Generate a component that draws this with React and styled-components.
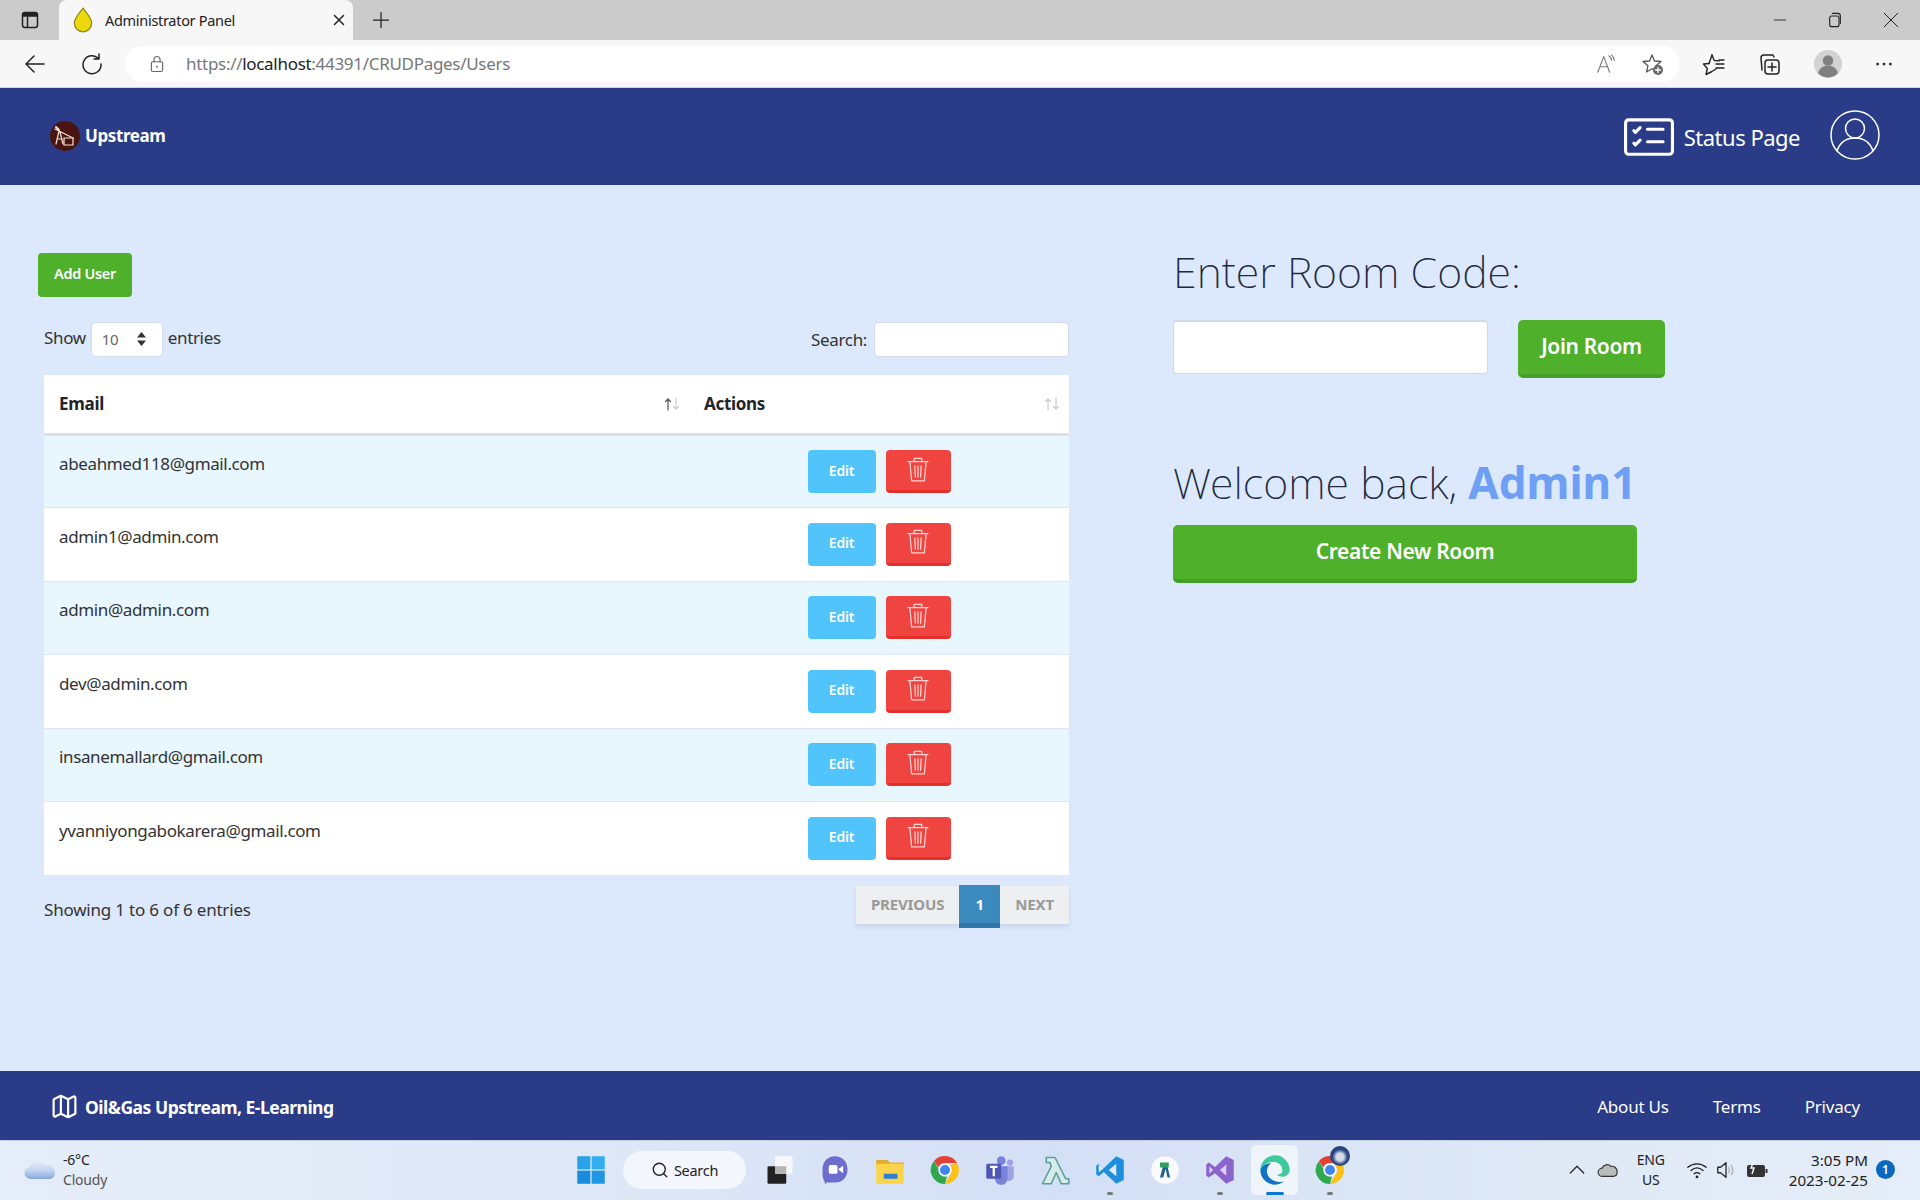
import React from "react";
import styled, { createGlobalStyle } from "styled-components";
import { BsCardChecklist } from "react-icons/bs";
import { Search as SearchGlass, Map as MapIcon } from "lucide-react";

const GlobalStyle = createGlobalStyle`
  html, body {
    margin: 0;
    padding: 0;
    height: 100%;
    overflow: hidden;
  }
  body {
    font-family: "Noto Sans", "Open Sans", sans-serif;
    background: #dce8fb;
  }
  * { box-sizing: border-box; }
`;

const Page = styled.div`
  display: flex;
  flex-direction: column;
  width: 1920px;
  height: 1200px;
`;

/* browser chrome */
const TabStrip = styled.div`
  display: flex;
  align-items: flex-end;
  height: 40px;
  background: #cbcbcb;
  flex: none;
`;
const SideToggle = styled.div`
  width: 59px;
  height: 40px;
  padding-left: 20px;
  display: flex;
  align-items: center;
`;
const Tab = styled.div`
  width: 294px;
  height: 40px;
  display: flex;
  align-items: center;
  padding: 0 5px 0 14px;
  background: #f7f7f7;
  border-radius: 8px 8px 0 0;
`;
const TabTitle = styled.span`
  flex: 1;
  margin-left: 12px;
  font-size: 14.5px;
  letter-spacing: -0.3px;
  color: #222;
`;
const NewTab = styled.div`
  width: 56px;
  padding-left: 18px;
  height: 40px;
  display: flex;
  align-items: center;
`;
const WindowButtons = styled.div`
  margin-left: auto;
  display: flex;
  align-items: center;
  height: 40px;
  padding-right: 21px;
  gap: 40px;
`;
const Toolbar = styled.div`
  display: flex;
  align-items: center;
  flex: none;
  height: 48px;
  background: #f7f7f7;
  border-bottom: 1px solid #c9d6ea;
`;
const ToolSlot = styled.div`
  width: ${(p) => p.$w || 55}px;
  display: flex;
  justify-content: center;
  align-items: center;
`;
const AddressBar = styled.div`
  width: 1555px;
  height: 36px;
  margin-left: 11px;
  border-radius: 18px;
  background: #fff;
  display: flex;
  align-items: center;
  padding-left: 23px;
  flex: none;
`;
const Url = styled.div`
  margin-left: 20px;
  font-size: 17px;
  letter-spacing: -0.3px;
  color: #777;
  & b {
    font-weight: 400;
    color: #222;
  }
`;
const AddressRight = styled.div`
  margin-left: auto;
  display: flex;
  align-items: center;
  gap: 23px;
  padding-right: 16px;
`;

/* site nav */
const NavBar = styled.header`
  flex: none;
  height: 97px;
  background: #2a3b87;
  color: #fff;
  display: flex;
  align-items: center;
  padding: 0 40px 0 50px;
`;
const Brand = styled.div`
  display: flex;
  align-items: center;
  gap: 5px;
  margin-top: -2px;
  font-size: 17px;
  font-weight: 700;
  letter-spacing: -0.4px;
`;
const NavRight = styled.div`
  margin-left: auto;
  display: flex;
  align-items: center;
`;
const StatusLink = styled.div`
  display: flex;
  align-items: center;
  gap: 10px;
  font-size: 22px;
  letter-spacing: -0.5px;
  margin-right: 30px;
`;
const UserWrap = styled.div`
  margin-bottom: 4px;
`;

/* page body */
const Main = styled.main`
  flex: 1;
  display: flex;
  padding: 68px 0 0 38px;
  background: #dce8fb;
`;
const LeftCol = styled.section`
  width: 1031px;
  flex: none;
`;
const RightCol = styled.section`
  margin-left: 104px;
  margin-top: 1px;
  width: 500px;
  flex: none;
`;
const AddButton = styled.button`
  display: block;
  width: 94px;
  height: 44px;
  border: 0;
  border-radius: 4px;
  background: #4fb02c;
  color: #fff;
  font: 600 14.5px "Noto Sans", sans-serif;
  letter-spacing: -0.3px;
  padding: 0 0 4px;
`;
const TableTools = styled.div`
  display: flex;
  align-items: center;
  justify-content: space-between;
  margin: 24px 0 18px 6px;
  font-size: 17px;
  letter-spacing: -0.35px;
  color: #333;
`;
const ShowGroup = styled.label`
  display: flex;
  align-items: center;
  gap: 5px;
  height: 36px;
  & > span { margin-top: -3px; }
`;
const SelectBox = styled.div`
  width: 72px;
  height: 35px;
  background: #fff;
  border: 1px solid #d5dded;
  border-radius: 5px;
  display: flex;
  align-items: center;
  justify-content: space-between;
  padding: 0 15px 0 10px;
  font-size: 15px;
  color: #666;
`;
const SearchGroup = styled.label`
  display: flex;
  align-items: center;
  gap: 7px;
`;
const SearchInput = styled.input`
  width: 195px;
  height: 35px;
  background: #fff;
  border: 1px solid #d5dbe8;
  border-radius: 4px;
  outline: none;
`;
const Table = styled.table`
  width: 1025px;
  margin-left: 6px;
  border-collapse: collapse;
  table-layout: fixed;
  background: #fff;
  color: #333;
`;
const Th = styled.th`
  height: 59px;
  width: ${(p) => p.$w}px;
  padding: 0 9px 0 15px;
  border-bottom: 3px solid #dde1e6;
  text-align: left;
  font-size: 17px;
  font-weight: 700;
  letter-spacing: -0.3px;
  color: #212529;
`;
const ThInner = styled.div`
  display: flex;
  align-items: center;
  justify-content: space-between;
`;
const Tr = styled.tr`
  height: 73.5px;
  background: ${(p) => (p.$odd ? "#e8f6fe" : "#fff")};
  border-bottom: ${(p) => (p.$last ? "0" : "1px solid #dee6ee")};
`;
const EmailCell = styled.td`
  vertical-align: top;
  padding: 16.5px 15px 0;
  font-size: 17px;
  letter-spacing: -0.37px;
  color: #333;
`;
const ActionCell = styled.td`
  vertical-align: top;
  padding-top: 14.5px;
`;
const ActionGroup = styled.div`
  display: flex;
  justify-content: center;
  gap: 10px;
`;
const EditButton = styled.button`
  width: 68px;
  height: 43px;
  border: 0;
  border-radius: 4px;
  background: #50c4fb;
  color: #fff;
  font: 600 14px "Noto Sans", sans-serif;
  letter-spacing: -0.2px;
  padding: 0 0 3px;
`;
const DeleteButton = styled.button`
  width: 65px;
  height: 43px;
  border: 0;
  border-bottom: 3px solid #e42f2c;
  border-radius: 4px;
  background: #ef4440;
  padding: 0 0 3px;
  display: flex;
  align-items: center;
  justify-content: center;
`;
const TableFooter = styled.div`
  display: flex;
  justify-content: space-between;
  margin: 10px 0 0 6px;
  font-size: 17px;
  letter-spacing: -0.2px;
  color: #333;
`;
const Info = styled.div`
  padding-top: 13px;
`;
const Pager = styled.div`
  display: flex;
  align-items: flex-start;
  height: 43px;
`;
const PageText = styled.div`
  height: 38px;
  margin-top: 1px;
  display: flex;
  align-items: center;
  padding: 0 15px 3px;
  background: #eeeff0;
  box-shadow: 0 3px 4px rgba(90, 100, 120, 0.14);
  color: #999;
  font-size: 15px;
  font-weight: 700;
  letter-spacing: -0.15px;
`;
const PageNum = styled.div`
  width: 41px;
  height: 43px;
  display: flex;
  align-items: center;
  justify-content: center;
  background: #3a8abd;
  border-bottom: 5px solid #2f75a5;
  color: #fff;
  font-size: 15px;
  font-weight: 700;
`;
const RoomHeading = styled.h1`
  margin: 0;
  font-size: 43px;
  line-height: ${(p) => p.$lh}px;
  font-weight: 200;
  letter-spacing: 0;
  color: #212941;
  white-space: nowrap;
  & strong {
    font-size: 44px;
    font-weight: 700;
    color: #6e9ff4;
  }
`;
const RoomRow = styled.div`
  display: flex;
  gap: 30px;
  margin: 30px 0 76px;
  align-items: flex-start;
`;
const RoomInput = styled.input`
  width: 315px;
  height: 54px;
  background: #fff;
  border: 1px solid #d2d8e4;
  border-top-width: 2px;
  border-radius: 4px;
  outline: none;
`;
const GreenButton = styled.button`
  width: ${(p) => p.$w}px;
  height: 58px;
  border: 0;
  border-bottom: 4px solid #42a024;
  border-radius: 5px;
  background: #4fb02c;
  color: #fff;
  font: 600 21px "Noto Sans", sans-serif;
  letter-spacing: -0.35px;
  padding: 0 0 2px;
`;
const CreateWrap = styled.div`
  margin-top: 14px;
`;

/* site footer */
const FooterBar = styled.footer`
  flex: none;
  height: 69px;
  background: #2a3b87;
  color: #fff;
  display: flex;
  align-items: center;
  padding: 2px 60px 0 50px;
  font-size: 17px;
  letter-spacing: -0.2px;
`;
const FooterBrand = styled.div`
  display: flex;
  align-items: center;
  gap: 6px;
  font-size: 17.5px;
  letter-spacing: -0.5px;
  font-weight: 700;
`;
const FooterLinks = styled.nav`
  margin-left: auto;
  display: flex;
  gap: 44px;
`;

/* windows taskbar */
const Taskbar = styled.div`
  flex: none;
  height: 60px;
  display: flex;
  align-items: center;
  padding-bottom: 2px;
  background: linear-gradient(90deg, #e4edf8 0%, #dfe8f7 30%, #d3dff5 55%, #dfe9f6 80%, #e4edf8 100%);
  border-top: 1px solid #c5cde0;
  color: #222;
`;
const Weather = styled.div`
  width: 563px;
  padding-left: 24px;
  display: flex;
  align-items: center;
  gap: 7px;
  flex: none;
`;
const TwoLines = styled.div`
  font-size: 14px;
  line-height: 20px;
  letter-spacing: -0.2px;
  text-align: ${(p) => p.$align || "left"};
`;
const Clock = styled(TwoLines)`
  margin-left: 13px;
  font-size: 15.2px;
  letter-spacing: 0;
`;
const Muted = styled.div`
  color: #555;
`;
const TaskSlot = styled.div`
  position: relative;
  width: ${(p) => (p.$active ? 47 : 55)}px;
  margin: 0 ${(p) => (p.$active ? 4 : 0)}px;
  height: 50px;
  display: flex;
  align-items: center;
  justify-content: center;
  border-radius: 5px;
  background: ${(p) => (p.$active ? "rgba(255,255,255,.6)" : "none")};
`;
const RunDot = styled.span`
  position: absolute;
  bottom: 0;
  left: 50%;
  transform: translateX(-50%);
  width: ${(p) => (p.$active ? 18 : 6)}px;
  height: 3px;
  border-radius: 2px;
  background: ${(p) => (p.$active ? "#0a78d4" : "#777")};
`;
const SearchPill = styled.div`
  width: 123px;
  height: 38px;
  margin: 0 6px 0 5px;
  border-radius: 19px;
  background: #f3f6fd;
  display: flex;
  align-items: center;
  justify-content: center;
  gap: 5px;
  font-size: 14.5px;
  letter-spacing: -0.3px;
`;
const Tray = styled.div`
  margin-left: auto;
  display: flex;
  align-items: center;
  padding-right: 25px;
`;
const TrayItem = styled.div`
  width: ${(p) => p.$w}px;
  display: flex;
  justify-content: center;
  align-items: center;
`;
const Badge = styled.div`
  width: 19px;
  height: 19px;
  margin-left: 8px;
  border-radius: 50%;
  background: #0a68bf;
  color: #fff;
  font-size: 12px;
  font-weight: 600;
  display: flex;
  align-items: center;
  justify-content: center;
`;
const ProfileStack = styled.div`
  position: relative;
`;
const ProfileDot = styled.span`
  position: absolute;
  top: -9px;
  right: -5px;
  width: 20px;
  height: 20px;
  border-radius: 50%;
  background: radial-gradient(circle at 50% 55%, #d7dbe8 0 25%, #2c4a86 50%, #1b2f5c 100%);
`;

/* drawings */
const Svg = ({ s = 24, w, h, children, vb }) => (
  <svg width={w || s} height={h || s} viewBox={vb || "0 0 24 24"} fill="none" style={{ display: "block", flex: "none" }}>
    {children}
  </svg>
);

const Stroke = ({ d, c = "#222", sw = 1.6 }) => (
  <path d={d} stroke={c} strokeWidth={sw} strokeLinecap="round" strokeLinejoin="round" fill="none" />
);

const OilDrop = () => (
  <Svg w={20} h={26} vb="4 2 16 21">
    <path d="M12 3c3 4 7 8 7 12a7 7 0 0 1-14 0c0-4 4-8 7-12z" fill="#ecd80c" stroke="#8a8a20" strokeWidth="1" />
  </Svg>
);

const LogoMark = () => (
  <Svg s={30} vb="0 0 30 30">
    <circle cx="15" cy="15" r="15" fill="#4a1510" />
    <Stroke d="M5 8l18 9M9 10l-3 13M10 11l3 12M7 18h5" c="#f3e4d8" sw="1.2" />
    <path d="M14 17h9v7h-9z" stroke="#f3e4d8" strokeWidth="1.2" />
    <Stroke d="M6 6l3 3" c="#f3e4d8" sw="2" />
  </Svg>
);

const UserCircle = () => (
  <Svg s={50} vb="0 0 50 50">
    <circle cx="25" cy="25" r="24" stroke="#fff" strokeWidth="1.5" />
    <circle cx="25" cy="18.5" r="9.5" stroke="#fff" strokeWidth="1.5" />
    <Stroke d="M7 41c3-9 10-13 18-13s15 4 18 13" c="#fff" sw="1.5" />
  </Svg>
);

const TrashCan = () => (
  <Svg s={30}>
    <Stroke d="M4 6h16M9 6V3.500h6V6M5.500 6l1.400 15.500h10.200L18.500 6M9.500 9.500l.4 9M12 9.500v9M14.500 9.500l-.4 9" c="#fbd5d3" sw="1" />
  </Svg>
);

const UpDown = () => (
  <Svg w={11} h={16} vb="0 0 11 16">
    <path d="M5.500 1L10 6.500H1zM5.500 15L1 9.500h9z" fill="#333" />
  </Svg>
);

const SortArrows = ({ active }) => (
  <Svg w={16} h={14} vb="0 0 16 14">
    <Stroke d="M4 13V2M1.500 4.500L4 2l2.500 2.500" c={active ? "#555" : "#c9ccd1"} sw="1.200" />
    <Stroke d="M12 1v11M9.500 9.500L12 12l2.500-2.500" c="#c9ccd1" sw="1.200" />
  </Svg>
);

const CloudIcon = () => (
  <Svg w={32} h={26} vb="0 0 32 24">
    <defs>
      <linearGradient id="cloudFill" x1="0" y1="0" x2="0" y2="1">
        <stop offset="0" stopColor="#e4ecf8" />
        <stop offset="0.5" stopColor="#c4d5ef" />
        <stop offset="1" stopColor="#86a8dc" />
      </linearGradient>
    </defs>
    <path d="M7 21a6 6 0 0 1-1-12c2-6 11-8 14.500-2.500C26 6 31 9 31 15c0 4-3 6-6 6z" fill="url(#cloudFill)" />
  </Svg>
);

const ChromeIcon = ({ s = 30 }) => (
  <Svg s={s} vb="0 0 30 30">
    <path d="M15 1a14 14 0 0 1 12.100 7H15a7 7 0 0 0-6.600 4.600L4 6A14 14 0 0 1 15 1z" fill="#e34133" />
    <path d="M27.100 8A14 14 0 0 1 15 29l5.700-10A7 7 0 0 0 20 10z" fill="#fbc116" />
    <path d="M4 6l6.600 11.800A7 7 0 0 0 17 21.600L15 29A14 14 0 0 1 4 6z" fill="#2fa84f" />
    <circle cx="15" cy="15" r="6.600" fill="#fff" />
    <circle cx="15" cy="15" r="5" fill="#3f85f4" />
  </Svg>
);

const taskIcons = [
  {
    key: "taskview",
    icon: (
      <Svg s={30}>
        <rect x="2" y="9" width="15" height="14" rx="1" fill="#222" />
        <rect x="8" y="1" width="14" height="14" rx="1" fill="#f6f7f8" />
        <rect x="8" y="9" width="9" height="6" fill="#b5b5b5" />
      </Svg>
    ),
  },
  {
    key: "meet",
    icon: (
      <Svg s={30}>
        <path d="M12 1c6 0 10 4.500 10 10.500S18 22 12 22H5l-.500 1.500L3 20c-1-2-1-5-1-8.500C2 5.500 6 1 12 1z" fill="#6d6dce" />
        <rect x="7" y="8" width="7" height="7" rx="1.500" fill="#fff" />
        <path d="M15 11l3.500-2.500v6L15 12z" fill="#fff" />
      </Svg>
    ),
  },
  {
    key: "folder",
    icon: (
      <Svg s={30}>
        <path d="M1 4h9l2 2h11v4H1z" fill="#e2ad2c" />
        <rect x="1" y="7" width="22" height="16" fill="#fbd34b" />
        <rect x="7" y="15" width="11" height="4" fill="#2f80d2" />
      </Svg>
    ),
  },
  { key: "chrome", icon: <ChromeIcon /> },
  {
    key: "teams",
    icon: (
      <Svg s={30}>
        <circle cx="13" cy="4.500" r="3.500" fill="#7b83d8" />
        <circle cx="20" cy="6" r="2.500" fill="#9ca2e6" />
        <path d="M15 9h8v8a4 4 0 0 1-8 0z" fill="#9ca2e6" />
        <path d="M7 9h11v10a5 5 0 0 1-10 0z" fill="#7b83d8" />
        <rect x="1" y="7" width="12" height="12" rx="1" fill="#4e57b5" />
        <path d="M4 9.500h6M7 9.500V17" stroke="#fff" strokeWidth="1.800" />
      </Svg>
    ),
  },
  {
    key: "lambda",
    icon: (
      <Svg s={30}>
        <path d="M5 2h7l8.500 17H23v4h-6l-4-9-4 9H2l7-14-1-3H5z" fill="#d6ecea" stroke="#5f9f9a" strokeWidth="1.300" strokeLinejoin="round" />
      </Svg>
    ),
  },
  {
    key: "vscode",
    dot: true,
    icon: (
      <Svg s={30}>
        <path d="M17 1l6 3v16l-6 3-10-9.500L3 17l-2-1.500v-7L3 7l4 3.500z" fill="#1e8fdc" />
        <path d="M17 7l-6 5 6 5z" fill="#dfeaf6" />
        <path d="M3 7l4 3.500L3 14z" fill="#dfeaf6" />
      </Svg>
    ),
  },
  {
    key: "azure",
    icon: (
      <Svg s={30}>
        <circle cx="12" cy="12" r="11" fill="#fafafa" />
        <path d="M8 18l3-11h2.500l2.500 11h-2l-1.500-7-2 7z" fill="#1c5e8f" />
        <rect x="8" y="6" width="7" height="4" fill="#2fa05e" />
      </Svg>
    ),
  },
  {
    key: "vstudio",
    dot: true,
    icon: (
      <Svg s={30}>
        <path d="M17 1l6 3v16l-6 3-9-8.500L3 18l-2-1.500v-9L3 6l5 3.500z" fill="#8c63c8" />
        <path d="M17 7.500L12 12l5 4.500z" fill="#dcd0f2" />
        <path d="M3.500 9L6.500 12l-3 3z" fill="#dcd0f2" />
      </Svg>
    ),
  },
  {
    key: "edge",
    active: true,
    dot: true,
    icon: (
      <Svg s={32}>
        <path d="M12 1a11 11 0 0 1 11 11c0 3-2.500 5-5.500 5-2 0-3.500-.8-4-1.500 3 0 4-1.500 4-3.500C17.500 8 14 6 10.500 6 6 6 2.500 8.500 1 12 1 6 6 1 12 1z" fill="#3ec99a" />
        <path d="M1 12c1-3 4-5 8-5-2 1.500-3.500 4-3 7 .6 4 5 7 10 7 1 0 2 0 3-.5C17 22 14.500 23 12 23 6 23 1 18 1 12z" fill="#0f74c4" />
      </Svg>
    ),
  },
  {
    key: "chromeprofile",
    dot: true,
    icon: (
      <ProfileStack>
        <ChromeIcon />
        <ProfileDot />
      </ProfileStack>
    ),
  },
];

const users = [
  "abeahmed118@gmail.com",
  "admin1@admin.com",
  "admin@admin.com",
  "dev@admin.com",
  "insanemallard@gmail.com",
  "yvanniyongabokarera@gmail.com",
];

export default function App() {
  return (
    <Page>
      <GlobalStyle />
      <TabStrip>
        <SideToggle>
          <Svg s={20}>
            <rect x="3" y="3" width="18" height="18" rx="3" stroke="#222" strokeWidth="1.800" />
            <path d="M3 8h18V6a3 3 0 0 0-3-3H6a3 3 0 0 0-3 3z" fill="#222" />
            <path d="M9 8v13" stroke="#222" strokeWidth="1.800" />
          </Svg>
        </SideToggle>
        <Tab>
          <OilDrop />
          <TabTitle>Administrator Panel</TabTitle>
          <Svg s={18}>
            <Stroke d="M6 6l12 12M18 6L6 18" sw="2" />
          </Svg>
        </Tab>
        <NewTab>
          <Svg s={20}>
            <Stroke d="M12 3v18M3 12h18" sw="1.500" />
          </Svg>
        </NewTab>
        <WindowButtons>
          <Svg s={14}>
            <Stroke d="M2 12h20" sw="1.500" />
          </Svg>
          <Svg s={16}>
            <rect x="4" y="6" width="14" height="16" rx="3" stroke="#222" strokeWidth="1.700" />
            <Stroke d="M8 2h8a4 4 0 0 1 4 4v11" sw="1.700" />
          </Svg>
          <Svg s={16}>
            <Stroke d="M2 2l20 20M22 2L2 22" sw="1.500" />
          </Svg>
        </WindowButtons>
      </TabStrip>
      <Toolbar>
        <ToolSlot $w={70}>
          <Svg>
            <Stroke d="M21 12H3M11 4l-8 8 8 8" sw="1.500" />
          </Svg>
        </ToolSlot>
        <ToolSlot $w={44}>
          <Svg>
            <Stroke d="M18.500 6.500A9 9 0 1 0 21 12M19 2v5h-5" sw="1.500" />
          </Svg>
        </ToolSlot>
        <AddressBar>
          <Svg s={18}>
            <rect x="4.500" y="9" width="15" height="13" rx="2" stroke="#666" strokeWidth="1.500" />
            <Stroke d="M8 9V6a4 4 0 0 1 8 0v3" c="#666" sw="1.500" />
            <circle cx="12" cy="15.500" r="1.300" fill="#666" />
          </Svg>
          <Url>
            https://<b>localhost</b>:44391/CRUDPages/Users
          </Url>
          <AddressRight>
            <Svg s={22}>
              <Stroke d="M3 21L9.500 4 16 21M5.500 15h8" c="#777" sw="1.200" />
              <Stroke d="M15 3c2 1 3 3 3 5M18 2c2 1.500 3 3.500 3 6" c="#777" sw="1.200" />
            </Svg>
            <Svg s={24}>
              <Stroke d="M12 3l2.500 6 6.500.500-5 4.200 1.500 6.300-5.500-3.300L6.500 20 8 13.700 3 9.500 9.500 9z" c="#555" sw="1.300" />
              <circle cx="18" cy="18" r="5" fill="#666" />
              <Stroke d="M18 15.500v5M15.500 18h5" c="#fff" sw="1.300" />
            </Svg>
          </AddressRight>
        </AddressBar>
        <ToolSlot $w={68}>
          <Svg>
            <Stroke d="M10 3l2.200 5.500 5 .4M9 20l-5 2.500 1.300-6L1.500 12l5.500-.5" sw="1.400" />
            <Stroke d="M10 3L7 11.500M9 20l5-3M14 12h8M14 16h8M17 8h5" sw="1.400" />
          </Svg>
        </ToolSlot>
        <ToolSlot $w={42}>
          <Svg>
            <rect x="8" y="8" width="14" height="14" rx="3" stroke="#222" strokeWidth="1.500" />
            <Stroke d="M15 11v8M11 15h8M17 5l-1-2H7a3 3 0 0 0-3 3l1 12" sw="1.500" />
          </Svg>
        </ToolSlot>
        <ToolSlot $w={76}>
          <Svg s={28}>
            <circle cx="12" cy="12" r="12" fill="#d3d3d3" />
            <circle cx="12" cy="9" r="4.500" fill="#808080" />
            <path d="M3.500 20c1-5 5-6.500 8.500-6.500s7.500 1.500 8.500 6.500a12 12 0 0 1-17 0z" fill="#808080" />
          </Svg>
        </ToolSlot>
        <ToolSlot $w={36}>
          <Svg s={22}>
            <circle cx="5" cy="12" r="1.500" fill="#222" />
            <circle cx="12" cy="12" r="1.500" fill="#222" />
            <circle cx="19" cy="12" r="1.500" fill="#222" />
          </Svg>
        </ToolSlot>
      </Toolbar>

      <NavBar>
        <Brand>
          <LogoMark />
          Upstream
        </Brand>
        <NavRight>
          <StatusLink>
            <BsCardChecklist size={50} />
            Status Page
          </StatusLink>
          <UserWrap>
            <UserCircle />
          </UserWrap>
        </NavRight>
      </NavBar>

      <Main>
        <LeftCol>
          <AddButton>Add User</AddButton>
          <TableTools>
            <ShowGroup>
              <span>Show</span>
              <SelectBox>
                10
                <UpDown />
              </SelectBox>
              <span>entries</span>
            </ShowGroup>
            <SearchGroup>
              Search:
              <SearchInput />
            </SearchGroup>
          </TableTools>
          <Table>
            <thead>
              <tr>
                <Th $w={645}>
                  <ThInner>
                    Email
                    <SortArrows active />
                  </ThInner>
                </Th>
                <Th $w={380}>
                  <ThInner>
                    Actions
                    <SortArrows />
                  </ThInner>
                </Th>
              </tr>
            </thead>
            <tbody>
              {users.map((email, i) => (
                <Tr key={email} $odd={i % 2 === 0} $last={i === users.length - 1}>
                  <EmailCell>{email}</EmailCell>
                  <ActionCell>
                    <ActionGroup>
                      <EditButton>Edit</EditButton>
                      <DeleteButton>
                        <TrashCan />
                      </DeleteButton>
                    </ActionGroup>
                  </ActionCell>
                </Tr>
              ))}
            </tbody>
          </Table>
          <TableFooter>
            <Info>Showing 1 to 6 of 6 entries</Info>
            <Pager>
              <PageText>PREVIOUS</PageText>
              <PageNum>1</PageNum>
              <PageText>NEXT</PageText>
            </Pager>
          </TableFooter>
        </LeftCol>
        <RightCol>
          <RoomHeading $lh={36}>Enter Room Code:</RoomHeading>
          <RoomRow>
            <RoomInput />
            <GreenButton $w={147}>Join Room</GreenButton>
          </RoomRow>
          <RoomHeading $lh={56}>
            Welcome back, <strong>Admin1</strong>
          </RoomHeading>
          <CreateWrap>
            <GreenButton $w={464}>Create New Room</GreenButton>
          </CreateWrap>
        </RightCol>
      </Main>

      <FooterBar>
        <FooterBrand>
          <MapIcon size={29} strokeWidth={1.8} />
          Oil&amp;Gas Upstream, E-Learning
        </FooterBrand>
        <FooterLinks>
          <span>About Us</span>
          <span>Terms</span>
          <span>Privacy</span>
        </FooterLinks>
      </FooterBar>

      <Taskbar>
        <Weather>
          <CloudIcon />
          <TwoLines>
            <div>-6°C</div>
            <Muted>Cloudy</Muted>
          </TwoLines>
        </Weather>
        <TaskSlot>
          <Svg s={30}>
            <rect x="1" y="1" width="10.500" height="10.500" fill="#2aa2e8" />
            <rect x="12.500" y="1" width="10.500" height="10.500" fill="#31aef0" />
            <rect x="1" y="12.500" width="10.500" height="10.500" fill="#1a8cdc" />
            <rect x="12.500" y="12.500" width="10.500" height="10.500" fill="#1f97e2" />
          </Svg>
        </TaskSlot>
        <SearchPill>
          <SearchGlass size={18} strokeWidth={1.8} />
          Search
        </SearchPill>
        {taskIcons.map((t) => (
          <TaskSlot key={t.key} $active={t.active}>
            {t.icon}
            {t.dot && <RunDot $active={t.active} />}
          </TaskSlot>
        ))}
        <Tray>
          <TrayItem $w={34}>
            <Svg s={18}>
              <Stroke d="M3 16l9-9 9 9" sw="1.600" />
            </Svg>
          </TrayItem>
          <TrayItem $w={28}>
            <Svg s={22}>
              <path d="M6 19a4.500 4.500 0 0 1-.5-9c1.500-4 7-5 9.500-2 4-.5 7 2 7 6 0 3-2 5-4.500 5z" fill="#bbb" stroke="#333" strokeWidth="1.300" />
            </Svg>
          </TrayItem>
          <TrayItem $w={58}>
            <TwoLines $align="center">
              <div>ENG</div>
              <div>US</div>
            </TwoLines>
          </TrayItem>
          <TrayItem $w={34}>
            <Svg s={22}>
              <Stroke d="M2 9c6-5 14-5 20 0M5.500 12.500c4-3.500 9-3.500 13 0M9 16c2-1.500 4-1.500 6 0" sw="1.500" />
              <circle cx="12" cy="19.500" r="1.500" fill="#222" />
            </Svg>
          </TrayItem>
          <TrayItem $w={24}>
            <Svg s={22}>
              <Stroke d="M3 9v6h3l6 5V4L6 9z" sw="1.400" />
              <Stroke d="M15 9c1 2 1 4 0 6M18 7c1.500 3 1.500 7 0 10" c="#aaa" sw="1.300" />
            </Svg>
          </TrayItem>
          <TrayItem $w={38}>
            <Svg s={24}>
              <rect x="2" y="7" width="18" height="12" rx="2" fill="#333" />
              <rect x="20.500" y="11" width="2" height="4" fill="#333" />
              <path d="M9 3l-3 7h3l-2 6" stroke="#f2f5fb" strokeWidth="1.500" />
            </Svg>
          </TrayItem>
          <Clock $align="right">
            <div>3:05 PM</div>
            <div>2023-02-25</div>
          </Clock>
          <Badge>1</Badge>
        </Tray>
      </Taskbar>
    </Page>
  );
}
